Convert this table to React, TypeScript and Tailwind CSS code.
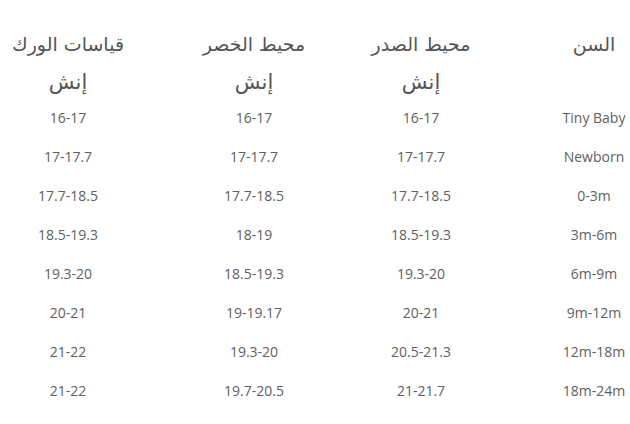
const columns = [
  {
    title: "قياسات الورك",
    unit: "إنش",
    values: ["16-17", "17-17.7", "17.7-18.5", "18.5-19.3", "19.3-20", "20-21", "21-22", "21-22"],
    box: "w-[120px] ml-[8px]",
  },
  {
    title: "محيط الخصر",
    unit: "إنش",
    values: ["16-17", "17-17.7", "17.7-18.5", "18-19", "18.5-19.3", "19-19.17", "19.3-20", "19.7-20.5"],
    box: "w-[120px] ml-[66px]",
  },
  {
    title: "محيط الصدر",
    unit: "إنش",
    values: ["16-17", "17-17.7", "17.7-18.5", "18.5-19.3", "19.3-20", "20-21", "20.5-21.3", "21-21.7"],
    box: "w-[120px] ml-[47px]",
  },
  {
    title: "السن",
    unit: "",
    values: ["Tiny Baby", "Newborn", "0-3m", "3m-6m", "6m-9m", "9m-12m", "12m-18m", "18m-24m"],
    box: "w-[72px] ml-[77px]",
  },
];

function SizeColumn({ title, unit, values, box }: (typeof columns)[number]) {
  return (
    <div className={`flex flex-col shrink-0 ${box}`}>
      <div
        dir="rtl"
        className="h-[40px] flex items-center justify-center whitespace-nowrap text-[19px] text-[#555] font-['DejaVu_Sans',sans-serif]"
      >
        {title}
      </div>
      <div
        dir="rtl"
        className="h-[34px] flex items-center justify-center pt-[4px] text-[21px] text-[#555] font-['DejaVu_Sans',sans-serif]"
      >
        {unit}
      </div>
      {values.map((v, i) => (
        <div
          key={i}
          className="h-[39px] flex items-center justify-center whitespace-nowrap text-[14px] text-[#606060] font-['Open_Sans',sans-serif]"
        >
          {v}
        </div>
      ))}
    </div>
  );
}

export default function App() {
  return (
    <div className="w-[630px] h-[424px] overflow-hidden bg-white">
      <div className="flex pt-[24px]">
        {columns.map((c) => (
          <SizeColumn key={c.title} {...c} />
        ))}
      </div>
    </div>
  );
}
